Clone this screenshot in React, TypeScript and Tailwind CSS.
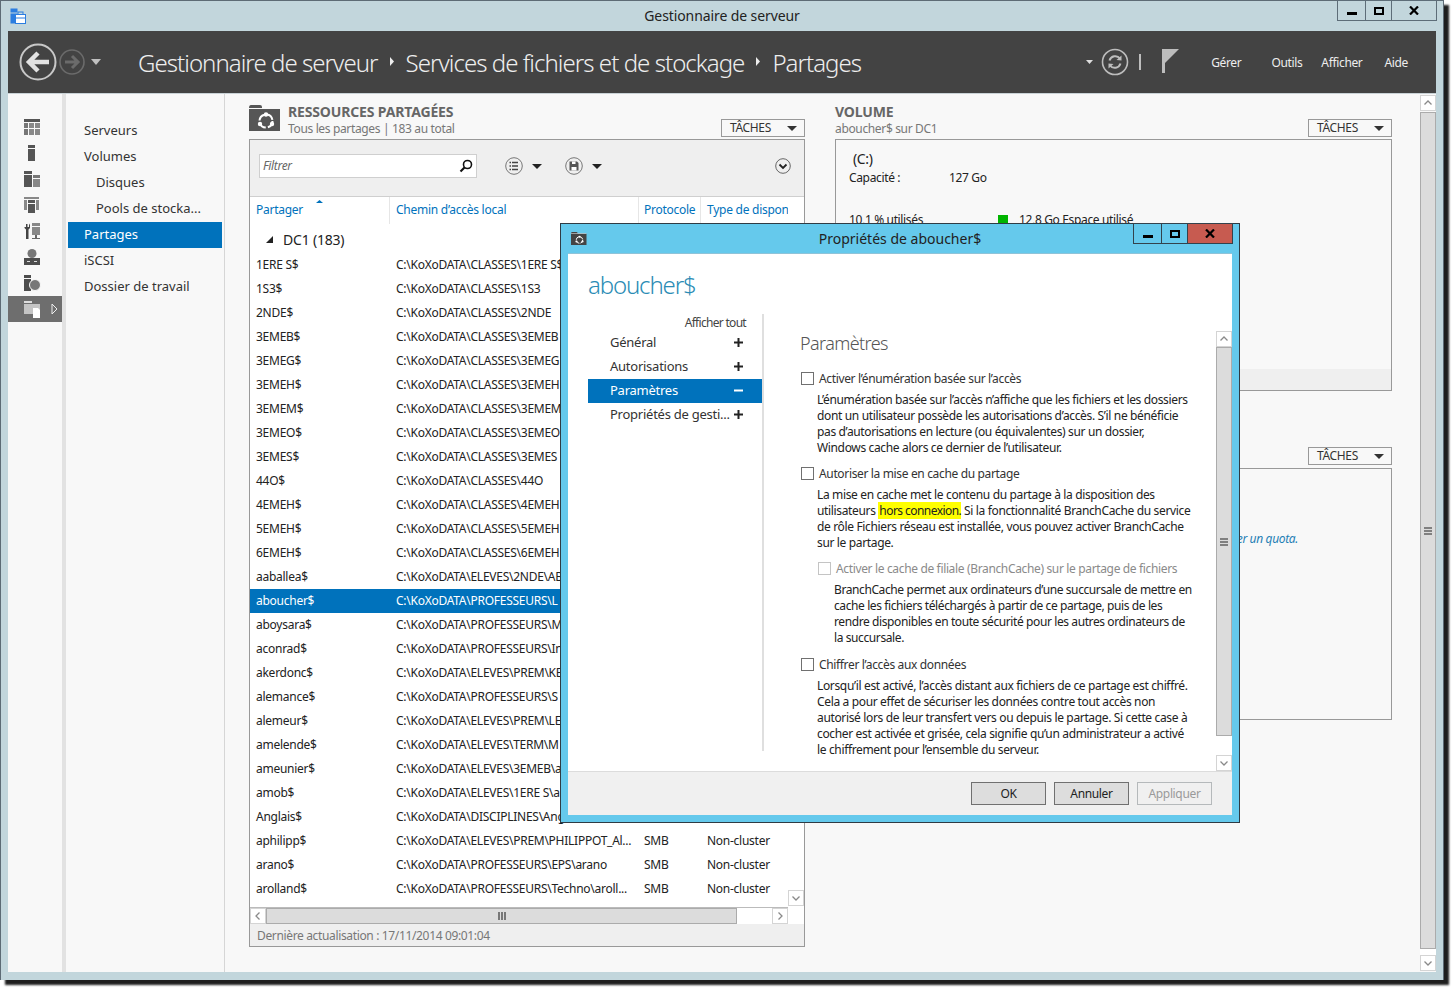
import React from "react";

const rows: [string, string][] = [
  ["1ERE S$", "C:\\KoXoDATA\\CLASSES\\1ERE S$"],
  ["1S3$", "C:\\KoXoDATA\\CLASSES\\1S3"],
  ["2NDE$", "C:\\KoXoDATA\\CLASSES\\2NDE"],
  ["3EMEB$", "C:\\KoXoDATA\\CLASSES\\3EMEB"],
  ["3EMEG$", "C:\\KoXoDATA\\CLASSES\\3EMEG"],
  ["3EMEH$", "C:\\KoXoDATA\\CLASSES\\3EMEH"],
  ["3EMEM$", "C:\\KoXoDATA\\CLASSES\\3EMEM"],
  ["3EMEO$", "C:\\KoXoDATA\\CLASSES\\3EMEO"],
  ["3EMES$", "C:\\KoXoDATA\\CLASSES\\3EMES"],
  ["44O$", "C:\\KoXoDATA\\CLASSES\\44O"],
  ["4EMEH$", "C:\\KoXoDATA\\CLASSES\\4EMEH"],
  ["5EMEH$", "C:\\KoXoDATA\\CLASSES\\5EMEH"],
  ["6EMEH$", "C:\\KoXoDATA\\CLASSES\\6EMEH"],
  ["aaballea$", "C:\\KoXoDATA\\ELEVES\\2NDE\\AB"],
  ["aboucher$", "C:\\KoXoDATA\\PROFESSEURS\\L"],
  ["aboysara$", "C:\\KoXoDATA\\PROFESSEURS\\M"],
  ["aconrad$", "C:\\KoXoDATA\\PROFESSEURS\\In"],
  ["akerdonc$", "C:\\KoXoDATA\\ELEVES\\PREM\\KE"],
  ["alemance$", "C:\\KoXoDATA\\PROFESSEURS\\S"],
  ["alemeur$", "C:\\KoXoDATA\\ELEVES\\PREM\\LE"],
  ["amelende$", "C:\\KoXoDATA\\ELEVES\\TERM\\M"],
  ["ameunier$", "C:\\KoXoDATA\\ELEVES\\3EMEB\\a"],
  ["amob$", "C:\\KoXoDATA\\ELEVES\\1ERE S\\a"],
  ["Anglais$", "C:\\KoXoDATA\\DISCIPLINES\\Ang"],
  ["aphilipp$", "C:\\KoXoDATA\\ELEVES\\PREM\\PHILIPPOT_Al..."],
  ["arano$", "C:\\KoXoDATA\\PROFESSEURS\\EPS\\arano"],
  ["arolland$", "C:\\KoXoDATA\\PROFESSEURS\\Techno\\aroll..."],
];

function Tri({ w = 10, h = 5, color = "#333", dir = "down" }: { w?: number; h?: number; color?: string; dir?: "down" | "up" }) {
  const pts = dir === "down" ? `0,0 ${w},0 ${w / 2},${h}` : `0,${h} ${w},${h} ${w / 2},0`;
  return (
    <svg width={w} height={h} className="shrink-0">
      <polygon points={pts} fill={color} />
    </svg>
  );
}

function Chev({ dir }: { dir: "up" | "down" | "left" | "right" }) {
  const d = {
    up: "M1.5 6.5 L5 3 L8.5 6.5",
    down: "M1.5 3.5 L5 7 L8.5 3.5",
    left: "M6.5 1.5 L3 5 L6.5 8.5",
    right: "M3.5 1.5 L7 5 L3.5 8.5",
  }[dir];
  return (
    <svg width="10" height="10" viewBox="0 0 10 10" fill="none" stroke="#8a8a8a" strokeWidth="1.3">
      <path d={d} />
    </svg>
  );
}

function WinButtons({ closeRed }: { closeRed?: boolean }) {
  const b = closeRed ? "border-[#33424c]" : "border-[#5d6d78]";
  return (
    <div className="flex h-[21px]">
      <div className={`w-[28px] h-full border border-r-0 ${b} flex items-center justify-center`}>
        <div className="w-[10px] h-[3px] bg-black mt-[5px]" />
      </div>
      <div className={`w-[26px] h-full border border-r-0 ${b} flex items-center justify-center`}>
        <div className="w-[10px] h-[8px] border-2 border-black" />
      </div>
      <div className={`w-[46px] h-full border ${b} flex items-center justify-center ${closeRed ? "bg-[#c75b50]" : ""}`}>
        <svg width="10" height="9" viewBox="0 0 10 9" stroke="black" strokeWidth="2.2">
          <path d="M1 0.5 L9 8.5 M9 0.5 L1 8.5" />
        </svg>
      </div>
    </div>
  );
}

function ShareIcon({ scale = 1, fill = "#565656" }: { scale?: number; fill?: string }) {
  return (
    <svg width={31 * scale} height={26 * scale} viewBox="0 0 31 26">
      <path d="M0 3 Q0 0 2 0 H11 Q13 0 13 2 V3 H31 V26 H0 Z" fill={fill} />
      <rect x="0" y="3" width="31" height="1" fill="#f8f8f8" />
      <circle cx="17" cy="16" r="6.5" fill="none" stroke="#fff" strokeWidth="2" strokeDasharray="8 2.2" />
      <circle cx="17" cy="9.5" r="2.2" fill="#fff" />
      <circle cx="11" cy="19" r="2.2" fill="#fff" />
      <circle cx="23" cy="19" r="2.2" fill="#fff" />
    </svg>
  );
}

function Taches() {
  return (
    <div className="w-[84px] h-[18px] border border-[#999] bg-[#f8f8f8] flex items-center pl-[8px] pr-[7px] justify-between text-[12px] text-[#333] leading-none">
      <span>TÂCHES</span>
      <Tri w={10} h={5} color="#333" />
    </div>
  );
}

function PanelHead({ title, sub, icon }: { title: string; sub: string; icon?: boolean }) {
  return (
    <div className="h-[36px] flex items-stretch justify-between">
      <div className="flex items-start">
        {icon && (
          <div className="w-[39px] pt-[2px]">
            <ShareIcon />
          </div>
        )}
        <div className="flex flex-col">
          <span className="text-[14px] font-bold leading-[17px] text-[#666] tracking-[-0.15px]">{title}</span>
          <span className="text-[12px] leading-[16px] text-[#777] mt-px">{sub}</span>
        </div>
      </div>
      <div className="mb-[2px] self-end">
        <Taches />
      </div>
    </div>
  );
}

function SideIcon({ children, active }: { children: React.ReactNode; active?: boolean }) {
  return (
    <div className={`h-[26px] relative flex items-center pl-[16px] ${active ? "bg-[#6e6e6e]" : ""}`}>
      <svg width="17" height="17" viewBox="0 0 17 17">
        {children}
      </svg>
      {active && (
        <svg width="7" height="12" viewBox="0 0 7 12" className="ml-[10px]" fill="none" stroke="#eee" strokeWidth="1">
          <path d="M1 1 L6 6 L1 11 Z" />
        </svg>
      )}
    </div>
  );
}

function NavItem({ label, indent, active }: { label: string; indent?: boolean; active?: boolean }) {
  return (
    <div
      className={`h-[26px] flex items-center text-[13px] tracking-[0px] mr-[2px] ml-[2px] ${indent ? "pl-[28px]" : "pl-[16px]"} ${
        active ? "bg-[#0072bc] text-white" : "text-[#333]"
      }`}
    >
      {label}
    </div>
  );
}

function Sign({ plus, white }: { plus?: boolean; white?: boolean }) {
  const c = white ? "#fff" : "#222";
  return (
    <svg width="9" height="9" viewBox="0 0 9 9" className="shrink-0 -mt-px">
      <rect x="0" y="3.5" width="9" height="2" fill={c} />
      {plus && <rect x="3.5" y="0" width="2" height="9" fill={c} />}
    </svg>
  );
}

function DlgNav({ label, plus = true, active }: { label: string; plus?: boolean; active?: boolean }) {
  return (
    <div
      className={`h-[24px] flex items-center justify-between pl-[22px] pr-[19px] text-[13px] tracking-[-0.25px] ${
        active ? "bg-[#0072bc] text-white" : "text-[#333]"
      }`}
    >
      <span>{label}</span>
      <Sign plus={plus} white={active} />
    </div>
  );
}

function Check({ label, disabled, className = "" }: { label: string; disabled?: boolean; className?: string }) {
  return (
    <div className={`h-[16px] flex items-center text-[12px] ${disabled ? "text-[#8a8a8a]" : "text-[#333]"} ${className}`}>
      <div className={`w-[13px] h-[13px] border mr-[5px] ml-px bg-white -mt-px ${disabled ? "border-[#c4c4c4]" : "border-[#707070]"}`} />
      <span>{label}</span>
    </div>
  );
}

function Para({ lines, className = "" }: { lines: React.ReactNode[]; className?: string }) {
  return (
    <div className={`text-[12px] leading-[16px] text-[#222] whitespace-nowrap mt-[5px] ${className}`}>
      {lines.map((l, i) => (
        <div key={i}>{l}</div>
      ))}
    </div>
  );
}

function DlgBtn({ label, disabled }: { label: string; disabled?: boolean }) {
  return (
    <div
      className={`w-[75px] h-[23px] border flex items-center justify-center text-[12px] ${
        disabled ? "border-[#b5b9bb] bg-[#f0f0f0] text-[#9a9a9a]" : "border-[#707070] bg-[#dddddd] text-[#222]"
      }`}
    >
      {label}
    </div>
  );
}

function ScrollBtn({ dir, className = "" }: { dir: "up" | "down" | "left" | "right"; className?: string }) {
  return (
    <div className={`w-[16px] h-[16px] bg-white border border-[#d4d4d4] flex items-center justify-center shrink-0 ${className}`}>
      <Chev dir={dir} />
    </div>
  );
}

function Grip() {
  return (
    <div className="flex flex-col gap-[1px] w-[8px]">
      <div className="h-[2px] bg-[#808080]" />
      <div className="h-[2px] bg-[#808080]" />
      <div className="h-[2px] bg-[#808080]" />
    </div>
  );
}

export default function App() {
  return (
    <div className="relative w-[1454px] h-[989px] bg-white overflow-hidden font-['Open_Sans','Noto_Sans',sans-serif] tracking-[-0.35px]">
      {/* main window */}
      <div className="w-[1444px] h-[980px] flex flex-col bg-[#c2d6dc] border-t border-l border-r border-[#5d6b75] px-[7px] shadow-[5px_5px_2px_#1e1e1e]">
        {/* title bar */}
        <div className="h-[30px] shrink-0 grid grid-cols-[1fr_auto_1fr]">
          <div className="pt-[6px] pl-[2px]">
            <svg width="16" height="16" viewBox="0 0 16 16" className="mt-px">
              <rect x="0.5" y="0.5" width="7" height="4" fill="#2b7de0" />
              <rect x="0.5" y="5.5" width="7" height="10" fill="#2b7de0" />
              <rect x="5.5" y="6.5" width="10" height="9" fill="#fff" stroke="#2b7de0" />
              <rect x="8" y="4" width="5" height="2.5" fill="none" stroke="#2b7de0" />
              <rect x="6" y="9.5" width="9" height="1" fill="#2b7de0" />
            </svg>
          </div>
          <div className="text-[14px] text-[#222] pt-[6px] leading-[18px] tracking-[-0.1px]">Gestionnaire de serveur</div>
          <div className="flex justify-end -mt-px -mr-px">
            <WinButtons />
          </div>
        </div>

        {/* header */}
        <div className="h-[62px] shrink-0 bg-[#434343] flex items-center text-white">
          <svg width="40" height="40" viewBox="0 0 40 40" className="ml-[11px]" fill="none">
            <circle cx="19" cy="20" r="17.5" stroke="#c8c8c8" strokeWidth="2" />
            <path d="M30 20 H11 M19 11 L10 20 L19 29" stroke="#e2e2e2" strokeWidth="4.5" />
          </svg>
          <svg width="26" height="26" viewBox="0 0 26 26" fill="none">
            <circle cx="13" cy="13" r="12" stroke="#6b6b6b" strokeWidth="1.6" />
            <path d="M6 13 H19 M13 7 L19 13 L13 19" stroke="#6b6b6b" strokeWidth="3" />
          </svg>
          <div className="ml-[6px]">
            <Tri w={10} h={6} color="#c0c0c0" />
          </div>
          <div className="ml-[37px] mt-[2px] flex items-center text-[24px] leading-none font-light text-[#eee] tracking-[-0.95px] whitespace-nowrap">
            <span>Gestionnaire de serveur</span>
            <svg width="6" height="9" className="mx-[11px] mb-[4px]">
              <polygon points="1,0 5,4.5 1,9" fill="#eee" />
            </svg>
            <span>Services de fichiers et de stockage</span>
            <svg width="6" height="9" className="mx-[11px] mb-[4px]">
              <polygon points="1,0 5,4.5 1,9" fill="#eee" />
            </svg>
            <span>Partages</span>
          </div>
          <div className="flex-1" />
          <Tri w={7} h={4} color="#ddd" />
          <svg width="28" height="28" viewBox="0 0 28 28" className="ml-[8px]" fill="none" stroke="#bdbdbd">
            <circle cx="14" cy="14" r="12.5" strokeWidth="1.6" />
            <path d="M8.5 12.5 A6 6 0 0 1 19 10.5" strokeWidth="2" />
            <path d="M19.5 15.5 A6 6 0 0 1 9 17.5" strokeWidth="2" />
            <polygon points="20.5,7.5 20.5,12.5 15.5,12" fill="#bdbdbd" stroke="none" />
            <polygon points="7.5,20.5 7.5,15.5 12.5,16" fill="#bdbdbd" stroke="none" />
          </svg>
          <div className="w-[2px] h-[16px] bg-[#bdbdbd] ml-[10px]" />
          <svg width="18" height="24" viewBox="0 0 18 24" className="ml-[21px] mb-[3px]">
            <rect x="0" y="0" width="3" height="24" fill="#bdbdbd" />
            <polygon points="3,0 17,0 3,14" fill="#bdbdbd" />
          </svg>
          <div className="flex items-center text-[12px] text-[#eee] whitespace-nowrap pt-px">
            <span className="ml-[31px]">Gérer</span>
            <span className="ml-[30px]">Outils</span>
            <span className="ml-[19px]">Afficher</span>
            <span className="ml-[22px] mr-[28px]">Aide</span>
          </div>
        </div>
        <div className="h-px shrink-0 bg-[#c9d2d6]" />

        {/* body */}
        <div className="h-[878px] shrink-0 flex bg-[#f8f8f8]">
          {/* icon rail */}
          <div className="w-[54px] shrink-0 pt-[20px] flex flex-col">
            <SideIcon>
              <rect x="0" y="0" width="16" height="3" fill="#555" />
              <rect x="0" y="4" width="4" height="5" fill="#777" />
              <rect x="5" y="4" width="5" height="5" fill="#888" />
              <rect x="11" y="4" width="5" height="5" fill="#888" />
              <rect x="0" y="10" width="4" height="6" fill="#777" />
              <rect x="5" y="10" width="5" height="6" fill="#888" />
              <rect x="11" y="10" width="5" height="6" fill="#888" />
            </SideIcon>
            <SideIcon>
              <rect x="4" y="0" width="7" height="3" fill="#555" />
              <rect x="4" y="4" width="7" height="12" fill="#555" />
            </SideIcon>
            <SideIcon>
              <rect x="0" y="0" width="8" height="3" fill="#555" />
              <rect x="0" y="4" width="8" height="12" fill="#555" />
              <rect x="9" y="4" width="7" height="3" fill="#777" />
              <rect x="9" y="8" width="7" height="8" fill="#888" />
            </SideIcon>
            <SideIcon>
              <rect x="0" y="0" width="15" height="2" fill="#888" />
              <rect x="0" y="3" width="3" height="10" fill="#888" />
              <rect x="12" y="3" width="3" height="10" fill="#888" />
              <rect x="4" y="3" width="7" height="3" fill="#555" />
              <rect x="4" y="7" width="7" height="9" fill="#555" />
            </SideIcon>
            <SideIcon>
              <path d="M0.5 0.5 V4 H2 V1 H3.5 V4 H5 V0.5 L6 2 V5 L4.5 6.5 V16 H2 V6.5 L0.5 5 Z" fill="#444" />
              <rect x="8" y="0" width="8" height="3" fill="#888" />
              <rect x="8" y="4" width="8" height="8" fill="#888" />
              <rect x="11" y="12" width="2" height="3" fill="#666" />
              <rect x="8" y="15" width="8" height="1" fill="#666" />
            </SideIcon>
            <SideIcon>
              <circle cx="8" cy="4.5" r="4.5" fill="#777" />
              <rect x="0" y="9" width="16" height="7" fill="#4d4d4d" />
              <rect x="3" y="12" width="3" height="1" fill="#ddd" />
              <rect x="10" y="12" width="3" height="1" fill="#ddd" />
            </SideIcon>
            <SideIcon>
              <rect x="0" y="0" width="7" height="3" fill="#4d4d4d" />
              <rect x="0" y="4" width="7" height="12" fill="#4d4d4d" />
              <circle cx="11" cy="10" r="5.5" fill="#777" stroke="#f8f8f8" />
            </SideIcon>
            <SideIcon active>
              <rect x="0" y="0" width="8" height="2" fill="#ddd" />
              <rect x="0" y="3" width="16" height="10" fill="#c4c4c4" />
              <path d="M9 7 H14 L16 9 V17 H9 Z" fill="#fff" />
            </SideIcon>
          </div>
          <div className="w-[4px] shrink-0 bg-[#e2e2e2]" />
          {/* nav */}
          <div className="w-[159px] shrink-0 border-r border-[#d6d6d6] pt-[24px] whitespace-nowrap">
            <NavItem label="Serveurs" />
            <NavItem label="Volumes" />
            <NavItem label="Disques" indent />
            <NavItem label="Pools de stocka..." indent />
            <NavItem label="Partages" active />
            <NavItem label="iSCSI" />
            <NavItem label="Dossier de travail" />
          </div>

          {/* main content */}
          <div className="flex-1 flex pl-[24px] pr-[28px] pt-[9px] min-w-0">
            {/* left panel */}
            <div className="w-[556px] shrink-0 flex flex-col">
              <PanelHead title="RESSOURCES PARTAGÉES" sub="Tous les partages | 183 au total" icon />
              <div className="h-[808px] border border-[#999] bg-white flex flex-col overflow-hidden">
                <div className="h-[57px] shrink-0 bg-[#efefef] border-b border-[#cfcfcf] flex items-center pl-[9px] pb-[4px]">
                  <div className="w-[218px] h-[24px] bg-white border border-[#cfcfcf] flex items-center justify-between pl-[3px] pr-[3px] text-[12px] italic text-[#666]">
                    <span>Filtrer</span>
                    <svg width="14" height="14" viewBox="0 0 14 14" fill="none" stroke="#111">
                      <circle cx="8.5" cy="5.5" r="4" strokeWidth="1.6" />
                      <path d="M5.5 8.5 L1.5 12.5" strokeWidth="2.2" />
                    </svg>
                  </div>
                  <svg width="18" height="18" viewBox="0 0 18 18" className="ml-[28px]" fill="none">
                    <circle cx="9" cy="9" r="8.3" stroke="#777" />
                    <path d="M7 5.5 H13 M7 9 H13 M7 12.5 H13" stroke="#444" strokeWidth="1.6" />
                    <path d="M4.5 5.5 H6 M4.5 9 H6 M4.5 12.5 H6" stroke="#444" strokeWidth="1.6" />
                  </svg>
                  <div className="ml-[9px]"><Tri w={10} h={5} color="#222" /></div>
                  <svg width="18" height="18" viewBox="0 0 18 18" className="ml-[23px]" fill="none">
                    <circle cx="9" cy="9" r="8.3" stroke="#777" />
                    <path d="M4.5 4.5 H12 L13.5 6 V13.5 H4.5 Z" fill="#555" />
                    <rect x="7" y="4.5" width="3.5" height="2.5" fill="#fff" />
                    <rect x="6.5" y="10" width="5" height="3.5" fill="#fff" />
                  </svg>
                  <div className="ml-[9px]"><Tri w={10} h={5} color="#222" /></div>
                  <div className="flex-1" />
                  <svg width="16" height="16" viewBox="0 0 16 16" className="mr-[13px]" fill="none">
                    <circle cx="8" cy="8" r="7.3" stroke="#666" />
                    <path d="M4.5 6.5 L8 10 L11.5 6.5" stroke="#222" strokeWidth="1.8" />
                  </svg>
                </div>
                <div className="h-[27px] shrink-0 flex text-[12px] text-[#0072bc] whitespace-nowrap tracking-[-0.26px]">
                  <div className="w-[140px] border-r border-[#e6e6e6] pl-[6px] pt-[4px] relative">
                    Partager
                    <div className="absolute left-[66px] top-[3px]"><Tri w={7} h={3} color="#0072bc" dir="up" /></div>
                  </div>
                  <div className="w-[249px] border-r border-[#e6e6e6] pl-[6px] pt-[4px]">Chemin d’accès local</div>
                  <div className="w-[62px] border-r border-[#e6e6e6] pl-[5px] pt-[4px]">Protocole</div>
                  <div className="w-[87px] pl-[6px] pt-[4px] overflow-hidden">Type de dispon</div>
                </div>
                <div className="flex-1 flex min-h-0">
                  <div className="flex-1 flex flex-col min-w-0">
                    <div className="h-[29px] shrink-0 flex items-center text-[14px] text-[#222] pl-[16px] pt-[2px] tracking-[-0.2px]">
                      <svg width="7" height="7"><polygon points="7,0 7,7 0,7" fill="#222" /></svg>
                      <span className="ml-[10px]">DC1 (183)</span>
                    </div>
                    {rows.map(([a, b], i) => {
                      const sel = a === "aboucher$";
                      const visible = i >= rows.length - 3;
                      return (
                        <div
                          key={a}
                          className={`h-[24px] shrink-0 flex items-center text-[12px] whitespace-nowrap tracking-[-0.26px] ${
                            sel ? "bg-[#0072bc] text-white" : "text-[#222]"
                          }`}
                        >
                          <div className="w-[146px] pl-[6px] shrink-0">{a}</div>
                          <div className="w-[248px] shrink-0 overflow-hidden">{b}</div>
                          {visible && <div className="w-[63px] shrink-0">SMB</div>}
                          {visible && <div className="shrink-0">Non-cluster</div>}
                        </div>
                      );
                    })}
                  </div>
                  <div className="w-[16px] shrink-0 flex flex-col justify-end pb-[1px]">
                    <ScrollBtn dir="down" />
                  </div>
                </div>
                <div className="h-[17px] shrink-0 flex items-stretch border-t border-[#bbb] mr-[16px]">
                  <ScrollBtn dir="left" className="h-full" />
                  <div className="w-[471px] bg-[#dcdcdc] border border-[#ababab] flex items-center justify-center">
                    <div className="flex gap-[1px] h-[8px]">
                      <div className="w-[2px] bg-[#777]" />
                      <div className="w-[2px] bg-[#777]" />
                      <div className="w-[2px] bg-[#777]" />
                    </div>
                  </div>
                  <div className="flex-1" />
                  <ScrollBtn dir="right" className="h-full" />
                </div>
                <div className="h-[22px] shrink-0 bg-[#efefef] flex items-center pl-[7px] pt-px text-[12px] text-[#777]">
                  Dernière actualisation : 17/11/2014 09:01:04
                </div>
              </div>
            </div>

            {/* right panel */}
            <div className="ml-[30px] flex-1 flex flex-col min-w-0">
              <PanelHead title="VOLUME" sub="aboucher$ sur DC1" />
              <div className="h-[252px] border border-[#999] flex flex-col">
                <div className="flex-1 pl-[13px] pt-[9px] text-[#222] whitespace-nowrap">
                  <div className="text-[14px] leading-[20px] pl-[4px]">(C:)</div>
                  <div className="flex text-[12px] leading-[16px] mt-[1px]">
                    <span className="w-[100px]">Capacité :</span>
                    <span>127 Go</span>
                  </div>
                  <div className="flex items-center text-[12px] leading-[16px] mt-[26px]">
                    <span className="w-[149px]">10,1 % utilisés</span>
                    <span className="w-[10px] h-[10px] bg-[#00b400] mr-[11px]" />
                    <span>12,8 Go Espace utilisé</span>
                  </div>
                </div>
                <div className="h-[21px] bg-[#efefef]" />
              </div>
              <div className="mt-[56px] flex justify-end">
                <Taches />
              </div>
              <div className="mt-[3px] h-[252px] border border-[#999] pt-[61px] text-right pr-[93px] text-[12px] italic text-[#1f7fb5] whitespace-nowrap">
                Configurer un quota.
              </div>
            </div>
          </div>

          {/* page scrollbar */}
          <div className="w-[16px] shrink-0 flex flex-col pt-[1px] pb-[1px]">
            <ScrollBtn dir="up" />
            <div className="flex-1 bg-[#dcdcdc] border border-[#ababab] flex items-center justify-center mt-px">
              <Grip />
            </div>
            <div className="h-[6px] bg-white" />
            <ScrollBtn dir="down" />
          </div>
        </div>
      </div>

      {/* dialog window */}
      <div className="absolute left-[560px] top-[223px] w-[680px] h-[600px] border border-[#2f3b44] bg-[#65c9ec] flex flex-col">
        <div className="h-[29px] shrink-0 grid grid-cols-[1fr_auto_1fr]">
          <div className="pl-[10px] pt-[8px]">
            <ShareIcon scale={0.5} fill="#444" />
          </div>
          <div className="text-[14px] text-[#222] pt-[6px] leading-[18px] tracking-[0px]">Propriétés de aboucher$</div>
          <div className="flex justify-end pr-[6px] -mt-px">
            <WinButtons closeRed />
          </div>
        </div>
        <div className="flex-1 mx-[7px] mb-[7px] bg-white flex flex-col min-h-0 border-t border-[#8fc3d8]">
          <div className="h-[517px] shrink-0 flex flex-col">
            <div className="h-[60px] shrink-0 pl-[20px] pt-[15px] text-[24px] leading-[32px] font-light text-[#2b8cb5] tracking-[-1.15px]">
              aboucher$
            </div>
            <div className="flex-1 flex min-h-0">
              <div className="w-[196px] shrink-0 pl-[20px] pb-[20px] flex">
                <div className="w-[176px] border-r-2 border-[#dfdfdf] whitespace-nowrap">
                  <div className="h-[16px] pt-px text-[12px] leading-[16px] text-right pr-[16px] text-[#444] tracking-[-0.7px]">Afficher tout</div>
                  <div className="h-px" />
                  <DlgNav label="Général" />
                  <DlgNav label="Autorisations" />
                  <DlgNav label="Paramètres" plus={false} active />
                  <DlgNav label="Propriétés de gesti..." />
                </div>
              </div>
              <div className="flex-1 pl-[36px] pt-[17px] min-w-0">
                <div className="text-[18px] leading-[24px] font-light text-[#555] tracking-[-0.6px]">Paramètres</div>
                <Check className="mt-[16px]" label="Activer l’énumération basée sur l’accès" />
                <Para
                  className="ml-[17px]"
                  lines={[
                    "L’énumération basée sur l’accès n’affiche que les fichiers et les dossiers",
                    "dont un utilisateur possède les autorisations d’accès. S’il ne bénéficie",
                    "pas d’autorisations en lecture (ou équivalentes) sur un dossier,",
                    "Windows cache alors ce dernier de l’utilisateur.",
                  ]}
                />
                <Check className="mt-[10px]" label="Autoriser la mise en cache du partage" />
                <Para
                  className="ml-[17px]"
                  lines={[
                    "La mise en cache met le contenu du partage à la disposition des",
                    <span key="h">
                      utilisateurs <span className="bg-[#ffff00] tracking-[-0.55px] pl-[1px]">hors connexion.</span> Si la fonctionnalité BranchCache du service
                    </span>,
                    "de rôle Fichiers réseau est installée, vous pouvez activer BranchCache",
                    "sur le partage.",
                  ]}
                />
                <Check className="mt-[10px] ml-[17px]" disabled label="Activer le cache de filiale (BranchCache) sur le partage de fichiers" />
                <Para
                  className="ml-[34px] tracking-[-0.4px]"
                  lines={[
                    "BranchCache permet aux ordinateurs d’une succursale de mettre en",
                    "cache les fichiers téléchargés à partir de ce partage, puis de les",
                    "rendre disponibles en toute sécurité pour les autres ordinateurs de",
                    "la succursale.",
                  ]}
                />
                <Check className="mt-[11px]" label="Chiffrer l’accès aux données" />
                <Para
                  className="ml-[17px]"
                  lines={[
                    "Lorsqu’il est activé, l’accès distant aux fichiers de ce partage est chiffré.",
                    "Cela a pour effet de sécuriser les données contre tout accès non",
                    "autorisé lors de leur transfert vers ou depuis le partage. Si cette case à",
                    "cocher est activée et grisée, cela signifie qu’un administrateur a activé",
                    "le chiffrement pour l’ensemble du serveur.",
                  ]}
                />
              </div>
              <div className="w-[16px] shrink-0 mt-[17px] flex flex-col">
                <ScrollBtn dir="up" />
                <div className="h-[389px] bg-[#dcdcdc] border border-[#ababab] flex items-center justify-center">
                  <Grip />
                </div>
                <div className="flex-1" />
                <ScrollBtn dir="down" />
              </div>
            </div>
          </div>
          <div className="flex-1 bg-[#f0f0f0] border-t border-[#dcdcdc] flex items-start justify-end gap-[8px] pt-[10px] pr-[20px]">
            <DlgBtn label="OK" />
            <DlgBtn label="Annuler" />
            <DlgBtn label="Appliquer" disabled />
          </div>
        </div>
      </div>
    </div>
  );
}
